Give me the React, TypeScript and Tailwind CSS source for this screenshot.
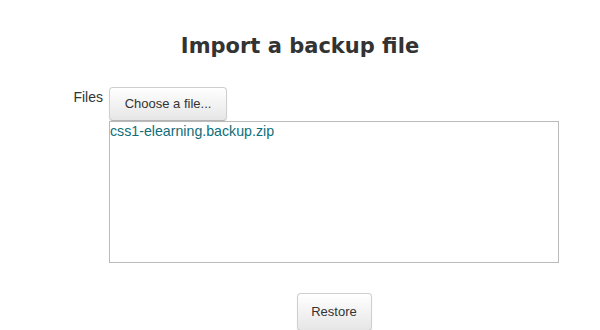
export default function App() {
  const btn =
    "rounded-[4px] border border-[#cfcfcf] border-b-[#b3b3b3] bg-gradient-to-b from-white to-[#e6e6e6] text-[#333] shadow-[inset_0_1px_0_rgba(255,255,255,0.2),0_1px_2px_rgba(0,0,0,0.05)]";
  return (
    <div className="w-[600px] h-[330px] bg-white overflow-hidden" style={{ fontFamily: '"Liberation Sans", Arial, sans-serif' }}>
      <h2 className="pt-[34px] text-center text-[21px] font-bold leading-[25px] text-[#333]" style={{ fontFamily: '"DejaVu Sans", sans-serif' }}>
        Import a backup file
      </h2>
      <div className="mt-[28px] flex">
        <div className="w-[103px] pt-0 text-right text-[14px] leading-[20px] text-[#333]">Files</div>
        <div className="ml-[6px] flex w-[450px] flex-col">
          <div>
            <button className={`${btn} h-[34px] w-[118px] text-[13px]`}>Choose a file...</button>
          </div>
          <div className="h-[142px] w-[450px] border border-[#bbb] text-[14.2px] leading-[18px] text-[#0f6e7a]">
            css1-elearning.backup.zip
          </div>
          <div className="mt-[30px] flex justify-center">
            <button className={`${btn} h-[38px] w-[75px] text-[13px]`}>Restore</button>
          </div>
        </div>
      </div>
    </div>
  );
}
